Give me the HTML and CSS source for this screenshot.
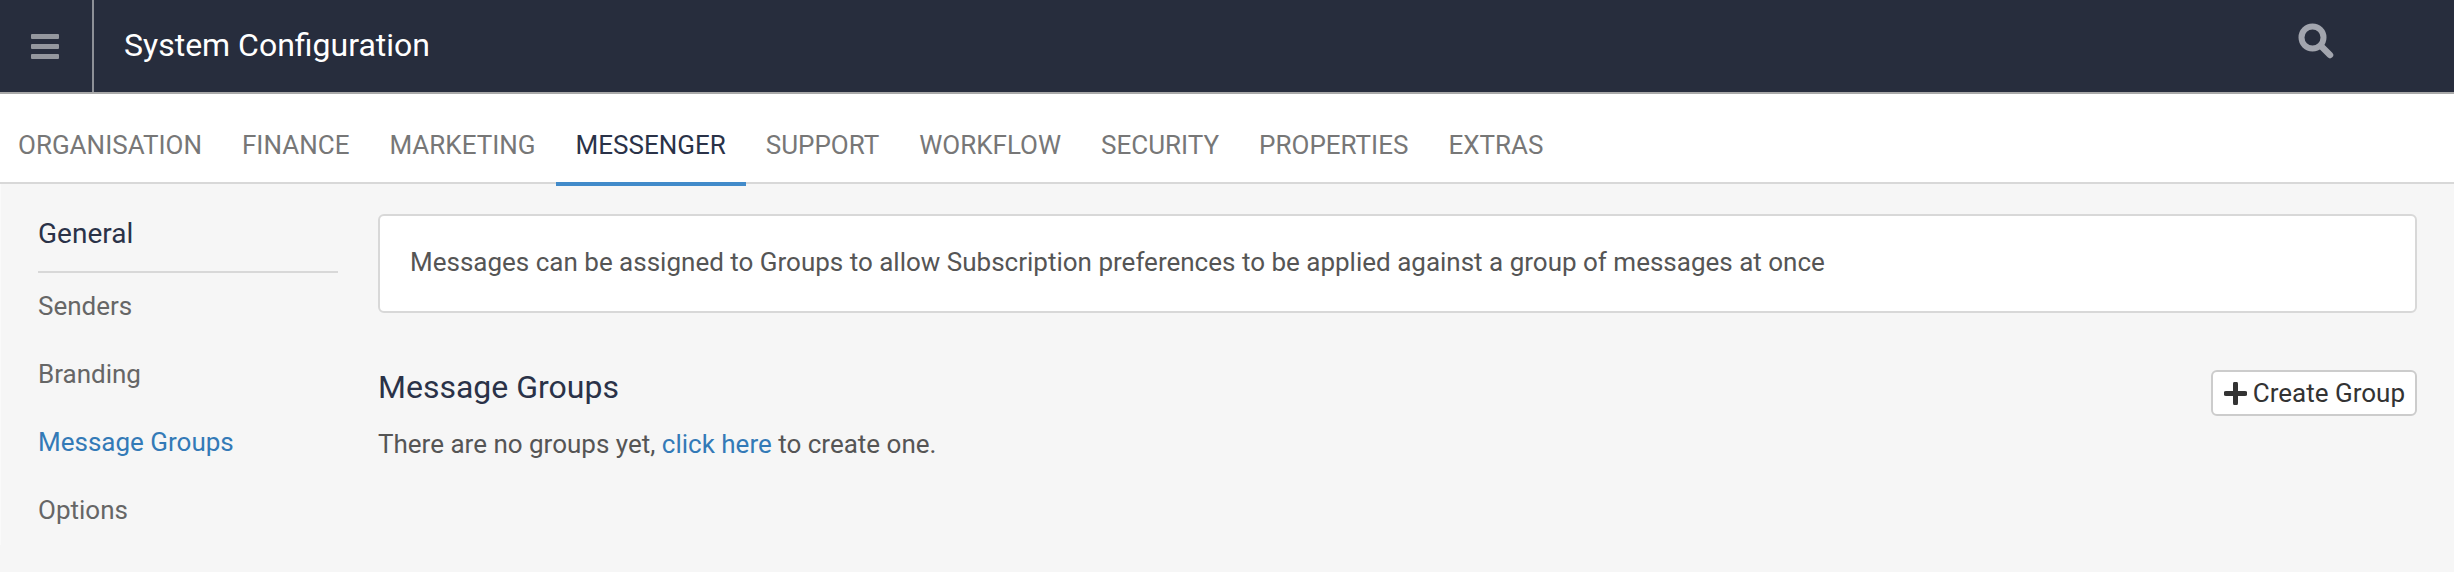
FILE: index.html
```html
<!DOCTYPE html>
<html lang="en">
<head>
    <meta charset="UTF-8">
    <title>System Configuration</title>
    <link rel="stylesheet" href="styles.css">
</head>
<body>
    <div class="topbar">
        <div class="menu-toggle">
            <svg width="28" height="25" viewBox="0 0 28 25"><rect width="28" height="5" rx="1"/><rect y="10" width="28" height="5" rx="1"/><rect y="20" width="28" height="5" rx="1"/></svg>
        </div>
        <div class="page-title">System Configuration</div>
        <div class="search-icon">
            <svg width="36" height="36" viewBox="0 0 36 36"><circle cx="14.500" cy="14.500" r="11" fill="none" stroke-width="6"/><path d="M23 23L32 32" stroke-width="6.500" stroke-linecap="round"/></svg>
        </div>
    </div>
    <div class="tabs">
        <a class="tab">ORGANISATION</a>
        <a class="tab">FINANCE</a>
        <a class="tab">MARKETING</a>
        <a class="tab active">MESSENGER</a>
        <a class="tab">SUPPORT</a>
        <a class="tab">WORKFLOW</a>
        <a class="tab">SECURITY</a>
        <a class="tab">PROPERTIES</a>
        <a class="tab">EXTRAS</a>
    </div>
    <div class="main">
        <div class="sidebar">
            <div class="sidebar-heading">General</div>
            <a class="side-link">Senders</a>
            <a class="side-link">Branding</a>
            <a class="side-link current">Message Groups</a>
            <a class="side-link">Options</a>
        </div>
        <div class="content">
            <div class="info-box">Messages can be assigned to Groups to allow Subscription preferences to be applied against a group of messages at once</div>
            <div class="section-header">
                <h2>Message Groups</h2>
                <button class="btn">
                    <svg width="23" height="23" viewBox="0 0 23 23"><path d="M11.500 2V21M2 11.500H21" stroke-width="5" stroke-linecap="round"/></svg>
                    Create Group
                </button>
            </div>
            <p class="empty-text">There are no groups yet, <a class="link">click here</a> to create one.</p>
        </div>
    </div>
</body>
</html>
```

FILE: styles.css
```css
* {
    box-sizing: border-box;
}
html, body {
    height: 100%;
}
body {
    margin: 0;
    font-family: Roboto, sans-serif;
    font-size: 26px;
    color: #555;
    background-color: #f6f6f6;
    overflow: hidden;
}
.topbar {
    height: 94px;
    display: flex;
    align-items: center;
    background-color: #272d3d;
    border-bottom: 2px solid #a9a9a9;
}
.menu-toggle {
    width: 94px;
    height: 92px;
    display: flex;
    align-items: center;
    padding-left: 31px;
    border-right: 2px solid #8d9097;
}
.menu-toggle svg {
    fill: #94979e;
}
.page-title {
    flex: 1;
    margin-left: 30px;
    margin-bottom: 3px;
    color: #fff;
    font-size: 32px;
}
.search-icon {
    display: flex;
    margin-right: 120px;
    margin-bottom: 10px;
}
.search-icon svg {
    stroke: #a2a5ae;
    fill: none;
}
.tabs {
    height: 90px;
    display: flex;
    background-color: #fff;
    border-bottom: 2px solid #d8d8d8;
}
.tab {
    height: 92px;
    padding: 0 20px;
    line-height: 102px;
    color: #777;
}
.tab:first-child {
    padding-left: 18px;
}
.tab.active {
    color: #2a3248;
    border-bottom: 4px solid #428bca;
}
.main {
    display: flex;
    padding: 30px 37px 0 0;
    border-left: 1px solid #fafafa;
}
.sidebar {
    width: 377px;
    flex-shrink: 0;
    padding-left: 37px;
}
.sidebar-heading {
    width: 300px;
    height: 59px;
    padding-top: 3px;
    color: #2a3248;
    font-size: 28px;
    border-bottom: 2px solid #d8d8d8;
}
.side-link {
    display: block;
    height: 68px;
    line-height: 66px;
    color: #666;
}
.side-link.current {
    color: #337ab7;
}
.content {
    flex: 1;
}
.info-box {
    height: 99px;
    padding: 31px 30px 0;
    background-color: #fff;
    border: 2px solid #d8d8d8;
    border-radius: 6px;
}
.section-header {
    display: flex;
    align-items: flex-start;
    justify-content: space-between;
    margin-top: 57px;
}
.section-header h2 {
    margin: -2px 0 0;
    font-size: 32px;
    font-weight: 400;
    color: #2a3248;
}
.btn {
    height: 46px;
    display: flex;
    align-items: center;
    gap: 6px;
    padding: 0 10px 0 11px;
    font-family: Roboto, sans-serif;
    font-size: 26px;
    color: #333;
    background-color: #fff;
    border: 2px solid #ccc;
    border-radius: 6px;
}
.btn svg {
    stroke: #333;
    fill: none;
}
.empty-text {
    margin: 13px 0 0;
}
.link {
    color: #337ab7;
}
```
